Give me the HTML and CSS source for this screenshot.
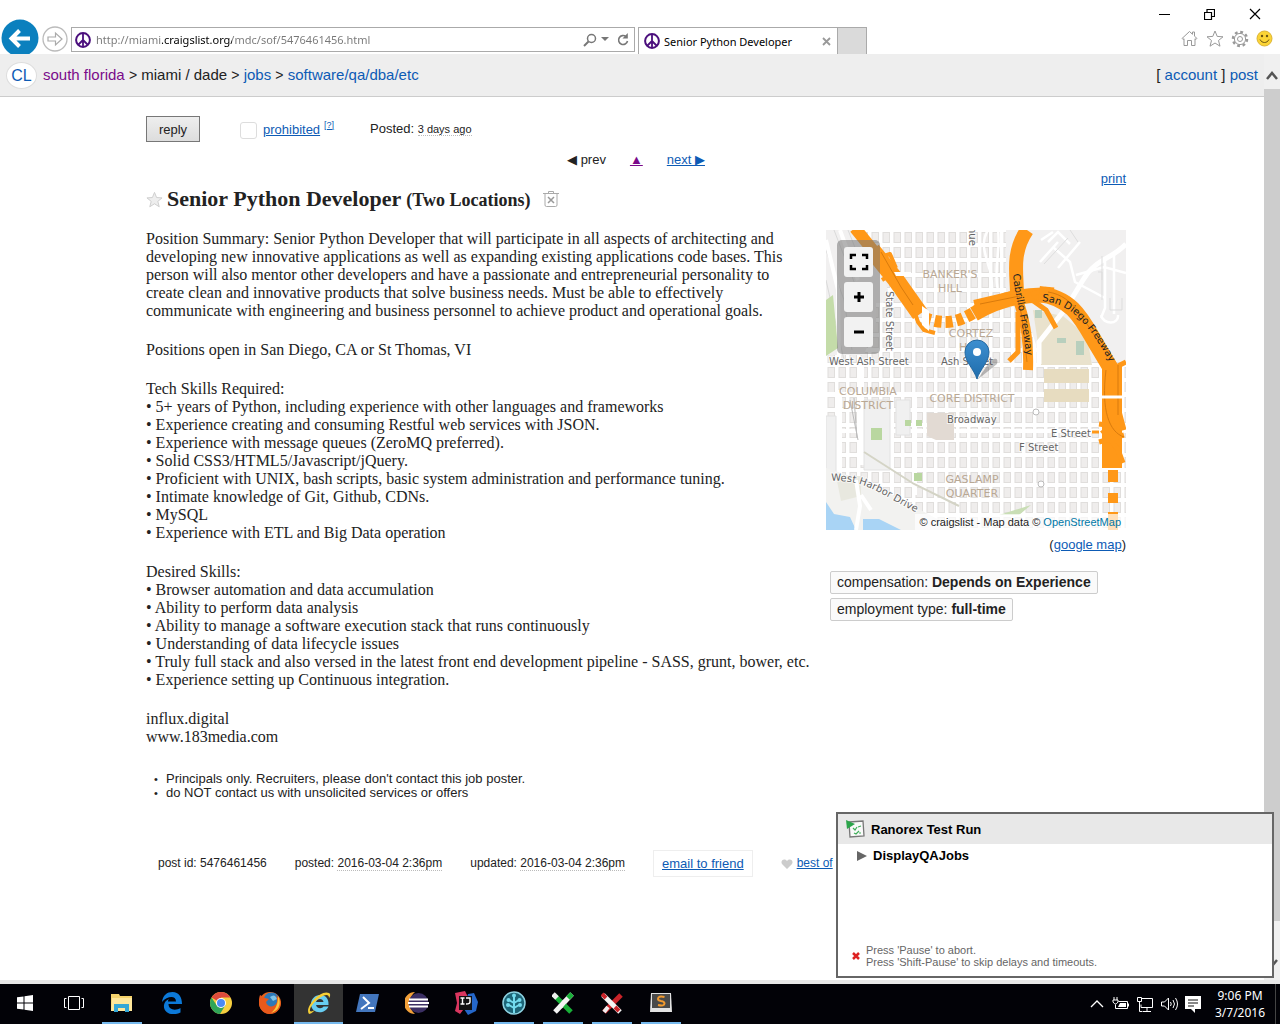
FILE: index.html
```html
<!DOCTYPE html>
<html lang="en">
<head>
<meta charset="utf-8">
<title>Senior Python Developer</title>
<link rel="stylesheet" href="styles.css">
</head>
<body>
<svg class="defs" width="0" height="0" aria-hidden="true">
  <symbol id="peace" viewBox="0 0 16 16"><circle cx="8" cy="8" r="6.9" fill="#fff" stroke="#4b0f7d" stroke-width="2"/><path d="M8 1v14M8 8l-5 5M8 8l5 5" stroke="#4b0f7d" stroke-width="1.8" fill="none"/></symbol>
</svg>

<header class="chrome">
  <button class="nav-btn" aria-label="Back"><svg width="40" height="36" viewBox="0 0 40 36"><circle cx="20" cy="20" r="18.5" fill="#0b80be"/><path d="M30 20.500H12M19.500 12.500l-8 8 8 8" fill="none" stroke="#fff" stroke-width="4"/></svg></button>
  <button class="nav-btn forward" aria-label="Forward"><svg width="26" height="26" viewBox="0 0 26 26"><circle cx="13" cy="13" r="12" fill="#fff" stroke="#bbb" stroke-width="1.300"/><path d="M6 11h7.500V7l6.500 6-6.500 6v-4H6z" fill="none" stroke="#aaa" stroke-width="1.200"/></svg></button>
  <div class="address">
    <svg width="16" height="16"><use href="#peace"/></svg>
    <input class="url" type="text" aria-label="Address" value="http://miami.craigslist.org/mdc/sof/5476461456.html">
    <button class="nav-btn" aria-label="Search"><svg width="14" height="14" viewBox="0 0 14 14"><circle cx="8.500" cy="5.500" r="4" fill="none" stroke="#777" stroke-width="1.500"/><path d="M5.500 8.500L1 13" stroke="#777" stroke-width="2"/></svg></button>
    <button class="nav-btn" aria-label="Search options"><svg width="8" height="5"><path d="M0 0h8L4 4z" fill="#777"/></svg></button>
    <button class="nav-btn" aria-label="Refresh"><svg width="12" height="14" viewBox="0 0 12 14"><path d="M9 3.600A4.500 4.500 0 1 0 10.500 8" fill="none" stroke="#777" stroke-width="1.600"/><path d="M10.800 0v5.500H5.500z" fill="#777"/></svg></button>
  </div>
  <div class="tab">
    <svg width="16" height="16"><use href="#peace"/></svg>
    <span class="tab-title">Senior Python Developer</span>
    <button class="nav-btn" aria-label="Close tab"><svg width="9" height="9"><path d="M1 1l7 7M8 1L1 8" stroke="#999" stroke-width="1.800"/></svg></button>
  </div>
  <button class="new-tab" aria-label="New tab"></button>
  <div class="chrome-right">
    <div class="window-buttons">
      <button aria-label="Minimize"><svg width="11" height="11"><path d="M0 5.500h11" stroke="#000"/></svg></button>
      <button aria-label="Restore"><svg width="11" height="11"><path d="M.5 3.500h7v7h-7zM3 3.500V.500h7.500v7H8" fill="none" stroke="#000" stroke-width="1.200"/></svg></button>
      <button aria-label="Close"><svg width="12" height="12"><path d="M1 1l10 10M11 1L1 11" stroke="#000" stroke-width="1.200"/></svg></button>
    </div>
    <div class="tool-buttons">
      <button aria-label="Home"><svg width="17" height="17" viewBox="0 0 17 17"><path d="M1 8.500L8.500 1.500 11.500 4.300V2h2v4.200L16 8.500l-1 1-1-.8V15.500h-3.500v-5h-4v5H3V8.700L2 9.500z" fill="none" stroke="#999"/></svg></button>
      <button aria-label="Favorites"><svg width="18" height="17" viewBox="0 0 18 17"><path d="M9 1l2.200 5.400 5.800.4-4.500 3.700 1.500 5.700L9 13l-5 3.200 1.500-5.700L1 6.800l5.800-.4z" fill="none" stroke="#999"/></svg></button>
      <button aria-label="Tools"><svg width="18" height="18" viewBox="0 0 18 18"><circle cx="9" cy="9" r="7" fill="none" stroke="#999" stroke-width="2.500" stroke-dasharray="2.800 2.700"/><circle cx="9" cy="9" r="5.600" fill="#fff" stroke="#999"/><circle cx="9" cy="9" r="2.500" fill="none" stroke="#999"/></svg></button>
      <button aria-label="Feedback"><svg width="17" height="17" viewBox="0 0 17 17"><circle cx="8.500" cy="8.500" r="7.500" fill="#fbd436" stroke="#dcb436"/><circle cx="6" cy="6" r="1.200" fill="#6b5312"/><circle cx="11" cy="6" r="1.200" fill="#6b5312"/><path d="M4 9.500c2 4 7 4 9 0" fill="none" stroke="#6b5312"/></svg></button>
    </div>
  </div>
</header>

<div class="viewport">
  <div class="page">
    <nav class="topbar">
      <a class="logo" href="#">CL</a>
      <div class="crumbs"><a class="visited" href="#">south florida</a> <i>&gt;</i> <span>miami / dade</span> <i>&gt;</i> <a href="#">jobs</a> <i>&gt;</i> <a href="#">software/qa/dba/etc</a></div>
      <div class="account">[ <a href="#">account</a> ] <a href="#">post</a></div>
    </nav>

    <main class="posting">
      <div class="actions">
        <button class="reply">reply</button>
        <div class="flag"><input type="checkbox" id="prohibited"><label for="prohibited"><a href="#">prohibited</a></label><sup><a href="#">[?]</a></sup></div>
        <p>Posted: <time>3 days ago</time></p>
      </div>
      <div class="pager"><span>◀ prev</span><a class="visited" href="#">▲</a><a href="#">next ▶</a></div>
      <a class="print" href="#">print</a>
      <h1>
        <svg width="17" height="17" viewBox="0 0 18 17"><path d="M9 1l2.200 5.400 5.800.4-4.500 3.700 1.500 5.700L9 13l-5 3.200 1.500-5.700L1 6.800l5.800-.4z" fill="#eee" stroke="#ccc"/></svg>
        <span class="title">Senior Python Developer <small>(Two Locations)</small></span>
        <svg class="trash" width="16" height="18" viewBox="0 0 16 18"><path d="M0 3.500h16M5.500 3V1.500h5V3M2 3.500v11.500q0 1.500 1.500 1.500h9q1.500 0 1.500-1.500V3.500" fill="none" stroke="#aaa"/><path d="M5 7l6 6M11 7l-6 6" stroke="#999" stroke-width="1.500"/></svg>
      </h1>

      <div class="columns">
        <section class="post-body">
          <p>Position Summary: Senior Python Developer that will participate in all aspects of architecting and<br>developing new innovative applications as well as expanding existing applications code bases. This<br>person will also mentor other developers and have a passionate and entrepreneurial personality to<br>create clean and innovative products that solve business needs. Must be able to effectively<br>communicate with engineering and business personnel to achieve product and operational goals.</p>
          <p>Positions open in San Diego, CA or St Thomas, VI</p>
          <p>Tech Skills Required:<br>• 5+ years of Python, including experience with other languages and frameworks<br>• Experience creating and consuming Restful web services with JSON.<br>• Experience with message queues (ZeroMQ preferred).<br>• Solid CSS3/HTML5/Javascript/jQuery.<br>• Proficient with UNIX, bash scripts, basic system administration and performance tuning.<br>• Intimate knowledge of Git, Github, CDNs.<br>• MySQL<br>• Experience with ETL and Big Data operation</p>
          <p>Desired Skills:<br>• Browser automation and data accumulation<br>• Ability to perform data analysis<br>• Ability to manage a software execution stack that runs continuously<br>• Understanding of data lifecycle issues<br>• Truly full stack and also versed in the latest front end development pipeline - SASS, grunt, bower, etc.<br>• Experience setting up Continuous integration.</p>
          <p>influx.digital<br>www.183media.com</p>
        </section>

        <aside class="side">
          <div class="map">
            <svg width="300" height="300" viewBox="0 0 300 300">
              <defs>
                <pattern id="blocks" width="11" height="15" patternUnits="userSpaceOnUse"><rect width="11" height="15" fill="#fff"/><rect x="2" y="2.500" width="6.500" height="10" fill="#efedec" stroke="#e0dedc"/></pattern>
                <path id="cabrillo" d="M187 44C190 75 198 95 201 134"/>
                <path id="sandiego" d="M216 71C243 73 262 92 286 136"/>
                <path id="harbor" d="M5 251C42 249 58 268 100 287"/>
                <linearGradient id="pin" x2="0" y2="1"><stop stop-color="#3d8fd0"/><stop offset="1" stop-color="#1f6cab"/></linearGradient>
              </defs>
              <rect width="300" height="300" fill="#f1f0f0"/>
              <path d="M38 0H180V70L202 90 215 130 270 136 275 300H75L42 255 0 235V125L38 125 62 60z" fill="url(#blocks)"/>
              <path d="M0 132H300V300H95L0 240z" fill="url(#blocks)"/>
              <path d="M50 73H90V128H50z" fill="url(#blocks)"/>
              <g fill="none" stroke="#d9d9d9"><path d="M0 20l18 50 8 50M8 0l24 62M0 50l18 80M22 0l12 30"/></g>
              <g fill="none" stroke="#fff" stroke-width="4"><path d="M0 10l12 50 1 70M14 0l18 50M0 164h300M0 201h300M14 160v92M36 130v105M66 165v100M89 165v100"/></g>
              <path d="M0 70l7-5 5 53-12 8z" fill="#c4dca9"/>
              <path d="M38 170h26v70H38zM0 186h10v64H0zM70 170h14v35H70z" fill="#f0f0f0" stroke="#e2e2e2"/>
              <path d="M45 198h11v12H45zM79 190h6v6h-6zM90 190h6v6h-6zM88 243h8v8h-8z" fill="#b9d7a0"/>
              <path d="M101 183h27v27h-18l-9-4z" fill="#e2dad3"/>
              <path d="M0 238L42 252 132 300H0z" fill="#f2f2f0"/>
              <path d="M10 246h25v20l-20 5z" fill="#e8e8df"/>
              <path d="M38 222l50 32 45 22" fill="none" stroke="#d4d4c6" stroke-width="2"/>
              <path d="M0 272l8 12 16 3 6 13H0zM37 289l16 0 22 11H37z" fill="#a9d4f5"/>
              <path d="M30 250l4 26-4 24M35 265l10 15" fill="none" stroke="#fff" stroke-width="4"/>
              <path d="M24 170l8 40M28 168l3 40" fill="none" stroke="#bbb"/>
              <path d="M207 80l30 6 24 20 5 29h-51z" fill="#e9e2cd"/>
              <path d="M218 139h45v14h-45zM218 159h45v13h-45z" fill="#e7dcc0"/>
              <path d="M209 80h7v8h-7zM231 108h9v5h-9zM250 111h8v14h-8z" fill="#b8cfbd"/>
              <path d="M205 275l-12 10h-20z" fill="#c9deb5"/>
              <g fill="none" stroke="#fff" stroke-width="2.500"><path d="M162 0c-12 20 6 35 4 60M172 0c3 20-5 40 0 60M214 32l18-20M222 12l10-10 12 12M228 18l16 14 5 20 30 16M250 45l28-8 22 6M279 28v50l-4 10M288 24v60M275 85c2 10 18 10 17 0M254 12l-22 26M215 10l12-8"/></g>
              <path d="M300 14C285 30 270 28 257 50L240 78 213 112v22" fill="none" stroke="#fff" stroke-width="5"/>
              <g fill="none" stroke="#ddd"><path d="M218 34l24-26M244 0l8 12M276 26v44M284 68v12h12V68M272 42h4v8"/></g>
              <g fill="none" stroke="#ff9818" stroke-linejoin="round">
                <path d="M29 -2L58 34" stroke-width="12"/>
                <path d="M46 20L70 50 94 84" stroke-width="17"/>
                <path d="M58 26l6-2 6 14M56 50l8-5M85 72l7 20 6 8 11 3" stroke-width="4"/>
                <path d="M98 88C120 95 132 93 152 80" stroke-width="12" stroke-dasharray="7 4"/>
                <path d="M148 84C172 70 198 64 222 65" stroke-width="15"/>
                <path d="M148 73L195 62" stroke-width="6"/>
                <path d="M201 0C184 25 192 48 191 70" stroke-width="14"/>
                <path d="M191 68C200 90 203 112 202 140" stroke-width="10"/>
                <path d="M192 82v40l-9 9M205 64c18-4 8-6 23-4M206 70l14 10 10 18" stroke-width="5"/>
                <path d="M213 64C248 68 257 92 272 117L287 142" stroke-width="16"/>
                <path d="M286 134V238" stroke-width="20"/>
                <path d="M287 240v12M287 263v10M287 282v18" stroke-width="10"/>
                <path d="M300 132l-16 8M276 200l18 22M273 194l22 3M273 212l25-7M290 170l8 30M291 217l6 16" stroke-width="5"/>
                <path d="M266 202h7" stroke-width="3"/>
              </g>
              <g fill="none" stroke="#d97b0d"><path d="M55 22l20 35 12 18M154 74l40-8M188 52l8 35 5 45M222 62c27 4 36 30 56 58M280 140c-5 40 3 62 18 67M292 135v50"/></g>
              <path d="M276 167h22" stroke="#fff" stroke-width="3"/>
              <path d="M96 76l7 5v20l-7-6zM68 42h17v4H70z" fill="#fff"/>
              <circle cx="210" cy="182" r="3" fill="#fff" stroke="#bbb"/><circle cx="215" cy="254" r="3" fill="#fff" stroke="#bbb"/>
              <g class="district"><text x="124" y="48" text-anchor="middle">BANKER'S</text><text x="124" y="62" text-anchor="middle">HILL</text><text x="145" y="107" text-anchor="middle">CORTEZ</text><text x="145" y="121" text-anchor="middle">HILL</text><text x="42" y="165" text-anchor="middle">COLUMBIA</text><text x="42" y="179" text-anchor="middle">DISTRICT</text><text x="146" y="172" text-anchor="middle">CORE DISTRICT</text><text x="146" y="253" text-anchor="middle">GASLAMP</text><text x="146" y="267" text-anchor="middle">QUARTER</text></g>
              <g class="street"><text x="3" y="135">West Ash Street</text><text x="115" y="135">Ash Street</text><text x="121" y="193">Broadway</text><text x="225" y="207">E Street</text><text x="193" y="221">F Street</text><text transform="translate(60 61) rotate(90)">State Street</text><text transform="translate(143 -3) rotate(90)">nue</text><text><textPath href="#harbor">West Harbor Drive</textPath></text></g>
              <g class="freeway"><text><textPath href="#cabrillo">Cabrillo Freeway</textPath></text><text><textPath href="#sandiego">San Diego Freeway</textPath></text></g>
              <path d="M151 150l14-20q8-4 6 4z" fill="#000" opacity=".25"/>
              <path d="M151 149C148 139 139 132 139 122a12 12 0 0 1 24 0C163 132 154 139 151 149z" fill="url(#pin)" stroke="#2468a0"/><circle cx="151" cy="122" r="4" fill="#fff"/>
            </svg>
            <div class="map-controls">
              <button aria-label="Full screen"><svg width="20" height="18"><path d="M2 6V2h5M13 2h5v4M18 12v4h-5M7 16H2v-4" fill="none" stroke="#000" stroke-width="2.500"/></svg></button>
              <button aria-label="Zoom in"><svg width="10" height="10"><path d="M0 5h10M5 0v10" stroke="#000" stroke-width="3"/></svg></button>
              <button aria-label="Zoom out"><svg width="10" height="10"><path d="M0 5h10" stroke="#000" stroke-width="3"/></svg></button>
            </div>
            <p class="credit">© craigslist - Map data © <a href="#">OpenStreetMap</a></p>
          </div>
          <p class="google">(<a href="#">google map</a>)</p>
          <p class="attrs"><span>compensation: <b>Depends on Experience</b></span><span>employment type: <b>full-time</b></span></p>
        </aside>
      </div>

      <ul class="notices">
        <li>Principals only. Recruiters, please don't contact this job poster.</li>
        <li>do NOT contact us with unsolicited services or offers</li>
      </ul>
      <div class="infos">
        <p>post id: 5476461456</p>
        <p>posted: <time>2016-03-04 2:36pm</time></p>
        <p>updated: <time>2016-03-04 2:36pm</time></p>
        <a class="email" href="#">email to friend</a>
        <p class="best"><svg width="12" height="10" viewBox="0 0 12 10"><path d="M6 10L1 5C-1 2 3-1.500 6 2 9-1.500 13 2 11 5z" fill="#ccc"/></svg><a href="#">best of</a></p>
      </div>
    </main>
  </div>
  <div class="scrollbar" aria-hidden="true">
    <svg width="16" height="35"><path d="M3 25l5-6 5 6" fill="none" stroke="#555" stroke-width="2.500"/></svg>
    <div class="thumb"></div>
    <svg width="16" height="59"><path d="M3 39l5 6 5-6" fill="none" stroke="#555" stroke-width="2.500"/></svg>
  </div>

  <section class="ranorex">
    <h2><svg width="20" height="20" viewBox="0 0 20 20"><path d="M3 3l14-1 1 15-14 1z" fill="#fafafa" stroke="#777" stroke-width="1.300"/><path d="M0 1l9 4-8 5z" fill="#2ba44a"/><path d="M7 9l2 2 2-3M12 8l3-1M8 14l2 1 3-3M13 14h2" fill="none" stroke="#3fae59" stroke-width="1.200"/></svg>Ranorex Test Run</h2>
    <p class="run"><svg width="10" height="10"><path d="M0 0l10 5-10 5z" fill="#666"/></svg>DisplayQAJobs</p>
    <div class="hint"><svg width="8" height="8"><path d="M1 1l6 6M7 1L1 7" stroke="#d22" stroke-width="2.500"/></svg><p>Press 'Pause' to abort.<br>Press 'Shift-Pause' to skip delays and timeouts.</p></div>
  </section>
</div>

<footer class="taskbar">
  <button aria-label="Start"><svg width="16" height="16"><path d="M0 2.300l6.500-.9v6.100H0zM7.500 1.200L16 0v7.500H7.500zM0 8.500h6.500v6.100L0 13.700zM7.500 8.500H16V16l-8.500-1.200z" fill="#fff"/></svg></button>
  <button aria-label="Task View"><svg width="20" height="14"><path d="M4.500.5h11v13h-11zM2.500 2.500h-2v9h2M17.500 2.500h2v9h-2" fill="none" stroke="#fff"/></svg></button>
  <button class="open" aria-label="File Explorer"><svg width="22" height="20" viewBox="0 0 22 20"><path d="M0 1h8l1 2h12v15H0z" fill="#f6d36b"/><path d="M1 5h20v13H0z" fill="#ffe79b"/><path d="M3 19v-8h15v8h-4v-4H7v4z" fill="#35a7d6"/></svg></button>
  <button aria-label="Edge"><svg width="20" height="22" viewBox="0 0 20 22"><path d="M0 10C1 3 5 0 10.500 0 17 0 20 5 20 12H6.500c0 6 7 7 12 4v4.500C9 25 1 20 2 13c.4-3 2.500-5 5-6-1 1-1 2-1 2.500h8C14 3 5 4 0 10z" fill="#0c79d8"/></svg></button>
  <button aria-label="Chrome"><svg width="22" height="22" viewBox="0 0 22 22"><circle cx="11" cy="11" r="11" fill="#f7cf3f"/><path d="M11 11L1.500 5.500A11 11 0 0 1 20.500 5.500H11z" fill="#de4b3c"/><path d="M1.500 5.500A11 11 0 0 0 10 22l5.500-9-4.500-2-4.500 2z" fill="#2fa558"/><circle cx="11" cy="11" r="5" fill="#fff"/><circle cx="11" cy="11" r="4" fill="#4a8af4"/></svg></button>
  <button aria-label="Firefox"><svg width="22" height="22" viewBox="0 0 22 22"><circle cx="11" cy="11" r="11" fill="#e8641b"/><circle cx="12.500" cy="8.500" r="8" fill="#2d79b8"/><path d="M11 5q5-4 7 2l-4 2z" fill="#7fc4e8"/><path d="M1 3l5 3 4 1-3 3c1 5 7 6 10 2 2-3 1-6 0-9 8 6 5 18-6 19C1 22-2 12 1 3z" fill="#e8591c"/><path d="M19 4c4 7 1 15-7 17 5-4 7-9 7-17z" fill="#fbc63a"/></svg></button>
  <button class="open active" aria-label="Internet Explorer"><svg width="24" height="24" viewBox="0 0 24 24"><path d="M13 4c6 0 9 4 8.500 10H9c1 4 6 4 7.500 1.500h5C18 24 4 23 4 13c0-5 4-9 9-9zM9 11h7.500C16 7 10 7 9 11z" fill="#67cdf2"/><path d="M2 23C-3 17 13-2 22 2c2 1 1 4 0 5 0-3-2-4-6-2C8 9 2 17 3 20c1 1 3 0 5-1-3 3-5 4-6 4z" fill="#f6cf35"/></svg></button>
  <button aria-label="PowerShell"><svg width="23" height="18" viewBox="0 0 23 18"><path d="M4 0h19l-4 18H0z" fill="#4376bd"/><path d="M7 3l6 6-8 6M12 14h6" fill="none" stroke="#fff" stroke-width="2"/></svg></button>
  <button aria-label="Eclipse"><svg width="24" height="22" viewBox="0 0 24 22"><path d="M10 0a11 11 0 0 0 0 22 14 14 0 0 1 0-22z" fill="#f3a13a"/><circle cx="13.500" cy="11" r="10" fill="#3b2f63"/><path d="M4 7.500h19M3 11h21M4 14.500h19" stroke="#fff" stroke-width="1.800"/></svg></button>
  <button aria-label="IntelliJ IDEA"><svg width="24" height="24" viewBox="0 0 24 24"><path d="M1 2l10-2 5 10-10 13-5-3 2-8z" fill="#d9365f"/><path d="M14 3l6-1 4 9-2 9-8 4-4-6z" fill="#2567c9"/><path d="M5 5h13v14H5z" fill="#111"/><path d="M6.500 7h4M8.500 7v6M6.500 13h4M12 7h4v4q0 2-4 2" fill="none" stroke="#fff" stroke-width="1.400"/></svg></button>
  <button class="open" aria-label="Source tree"><svg width="24" height="24" viewBox="0 0 24 24"><circle cx="12" cy="12" r="11" fill="#1d6577" stroke="#8ed3e2" stroke-width="1.500"/><path d="M12 22V4M12 17l-5-3M12 17l5-3M12 12L7 9M12 12l5-3" stroke="#73dbee" stroke-width="2"/><g fill="#73dbee"><circle cx="12" cy="4.500" r="2"/><circle cx="6.500" cy="9" r="2"/><circle cx="17.500" cy="9" r="2"/><circle cx="6" cy="14" r="2"/><circle cx="18" cy="14" r="2"/></g></svg></button>
  <button class="open" aria-label="Ranorex Studio"><svg width="22" height="22" viewBox="0 0 22 22"><path d="M20 2L3 20" stroke="#f4f4f4" stroke-width="5"/><path d="M16 6l4-4" stroke="#18b038" stroke-width="5"/><path d="M2 3l17 17" stroke="#18b038" stroke-width="5"/><path d="M1 2l4 4" stroke="#eee" stroke-width="5"/><path d="M13 9l-5 6" stroke="#f4f4f4" stroke-width="5"/></svg></button>
  <button class="open" aria-label="Ranorex Recorder"><svg width="22" height="22" viewBox="0 0 22 22"><path d="M20 3L3 20" stroke="#c92329" stroke-width="5"/><path d="M2 3l17 17" stroke="#f4f4f4" stroke-width="5"/><path d="M1 2l4 4M14 15l4 4" stroke="#c92329" stroke-width="4"/><path d="M7 15l-4 5" stroke="#eee" stroke-width="4"/></svg></button>
  <button class="open" aria-label="Sublime Text"><svg width="22" height="20" viewBox="0 0 22 20"><path d="M1 0h20l1 19H0z" fill="#e3e3e3"/><path d="M2 1h18v14H2z" fill="#4a4a4a"/><path d="M14.500 4Q8 2.500 8 6q0 1.500 3 2 3.500.5 3.500 2.500 0 3-6.500 1.500" fill="none" stroke="#f29a2e" stroke-width="2"/></svg></button>
  <div class="tray">
    <svg viewBox="0 0 24 20"><path d="M6 13l6-6 6 6" fill="none" stroke="#fff" stroke-width="1.300"/></svg>
    <svg viewBox="0 0 24 20"><path d="M9.500 7.500h9v7h-12v-4M5 3v3M8 3v3M4 6h5v2q-2.500 4-5 0zM19.500 9.500v3" fill="none" stroke="#fff"/><path d="M11 9h6v4H9z" fill="#fff"/></svg>
    <svg viewBox="0 0 24 20"><path d="M9 4.500h10.500v9H8v-3M10 17.500h8M14 14v3M4.500 3.500h4v4h-4zM6.500 8v9.500h3" fill="none" stroke="#fff"/></svg>
    <svg viewBox="0 0 24 20"><path d="M4.500 8h3l4-4v12l-4-4h-3zM13.500 8q1.500 2 0 4M16 6q3 4 0 8M18.500 4q4 6 0 12" fill="none" stroke="#fff"/></svg>
    <svg viewBox="0 0 24 20"><path d="M4 2h16v13h-6v4l-4-4H4z" fill="#fff"/><path d="M7 6h10M7 9h10M7 12h6" stroke="#111"/></svg>
    <p class="clock">9:06 PM<br>3/7/2016</p>
    <div class="peek"></div>
  </div>
</footer>
</body>
</html>
```

FILE: styles.css
```css
* { box-sizing: border-box; }
body { margin: 0; height: 100vh; display: flex; flex-direction: column; overflow: hidden; background: #fff; color: #222; font-family: "Liberation Sans", Arial, sans-serif; font-size: 13px; line-height: 15px; }
p, h1, h2, ul { margin: 0; padding: 0; }
button { margin: 0; padding: 0; border: 0; background: none; font: inherit; color: inherit; }
svg { display: block; flex: none; }
a { color: #0d5bb5; }
.visited { color: #7a0a8a; }
.defs { position: absolute; }

/* Browser chrome */
.chrome { display: flex; align-items: flex-end; height: 54px; overflow: hidden; font-family: "Noto Sans", "Open Sans", sans-serif; font-size: 11px; }
.forward { padding: 0 3px 2px 2px; }
.address { display: flex; align-items: center; gap: 4px; width: 564px; height: 25px; margin-bottom: 2px; padding: 0 5px 0 3px; border: 1px solid #aaa; }
.address .nav-btn + .nav-btn + .nav-btn { margin-left: 4px; }
.url { flex: 1; min-width: 0; height: 20px; padding: 0 1px; border: 0; outline: 0; font: inherit; color: transparent; background: linear-gradient(90deg, #777 67px, #000 67px, #000 137px, #777 137px); -webkit-background-clip: text; background-clip: text; }
.tab { display: flex; align-items: center; gap: 4px; width: 200px; height: 27px; margin-left: 3px; padding: 0 6px 0 5px; border: 1px solid #aaa; border-bottom: 0; }
.tab-title { flex: 1; color: #000; white-space: nowrap; }
.new-tab { width: 29px; height: 27px; border: 1px solid #aaa; border-width: 1px 1px 0 0; background: #dadada; }
.chrome-right { flex: 1; align-self: stretch; display: flex; flex-direction: column; padding-right: 3px; }
.window-buttons, .tool-buttons { display: flex; justify-content: flex-end; height: 28px; }
.tool-buttons { height: 21px; }
.window-buttons button, .tool-buttons button { display: flex; align-items: center; justify-content: center; width: 45px; }
.tool-buttons button { width: 25px; }

/* Page */
.viewport { flex: 1; min-height: 0; display: flex; position: relative; border-bottom: 4px solid #e8e8e8; }
.page { flex: 1; min-width: 0; overflow: hidden; }
.topbar { display: flex; align-items: center; height: 43px; padding: 0 6px; background: #eee; border-bottom: 1px solid #ccc; font-size: 15px; line-height: 18px; }
.topbar a { text-decoration: none; }
.topbar i { font-size: 14px; font-style: normal; }
.logo { width: 31px; height: 27px; margin-right: 6px; border: 1px solid #ddd; border-radius: 50%; background: #fff; font-size: 16px; line-height: 25px; text-align: center; }
.crumbs { flex: 1; }
.posting { max-width: 988px; margin: 0 auto; padding: 19px 0 0 8px; }
.actions { display: flex; align-items: center; height: 26px; }
.reply { width: 54px; height: 26px; margin-right: 40px; border: 1px solid #777; background: linear-gradient(#eee, #ddd); }
.flag { display: flex; align-items: center; width: 130px; }
.flag input { appearance: none; width: 17px; height: 17px; margin: 2px 6px 0 0; border: 1px solid #ddd; border-radius: 3px; }
.flag sup { margin: -8px 0 0 4px; font-size: 9px; line-height: 9px; }
time { border-bottom: 1px dotted #bbb; }
.actions time { font-size: 11px; }
.pager { display: flex; justify-content: center; gap: 24px; margin-top: 10px; }
.print { display: block; width: max-content; margin: 4px 0 0 auto; }
h1 { display: flex; align-items: center; height: 26px; margin-bottom: 18px; font-family: "Liberation Serif", "Times New Roman", serif; font-size: 22px; line-height: 26px; }
h1 small { font-size: 18px; }
.title { margin: 0 12px 0 4px; }
.columns { display: flex; justify-content: space-between; }
.post-body { display: flex; flex-direction: column; gap: 21px; font-family: "Liberation Serif", "Times New Roman", serif; font-size: 16px; line-height: 18px; white-space: nowrap; }
.side { width: 300px; }
.map { position: relative; overflow: hidden; }
.map text { font-family: "DejaVu Sans", sans-serif; font-size: 10px; }
.map .district text { font-size: 11px; }
.district { fill: #b9a894; }
.street { fill: #666; paint-order: stroke; stroke: #ffffffaa; stroke-width: 2px; }
.freeway { fill: #222; }
.map-controls { position: absolute; left: 11px; top: 10px; display: flex; flex-direction: column; gap: 5px; padding: 7px; border-radius: 5px; background: #7777778c; }
.map-controls button { display: flex; align-items: center; justify-content: center; width: 29px; height: 30px; border-radius: 3px; background: #f2f2f2; }
.credit { position: absolute; right: 0; bottom: 0; padding: 1px 5px 0; background: #ffffffb3; font-size: 11px; white-space: nowrap; }
.credit a { color: #0078a8; text-decoration: none; }
.google { margin-top: 7px; text-align: right; }
.attrs { display: flex; flex-direction: column; align-items: flex-start; gap: 4px; margin: 19px 0 0 4px; font-size: 14px; line-height: 21px; white-space: nowrap; }
.attrs span { padding: 0 6px; border: 1px solid #ccc; border-radius: 2px; background: #fafafa; }
.notices { margin-top: 26px; padding-left: 20px; list-style: none; line-height: 14px; }
.notices li::before { content: "•"; display: inline-block; width: 12px; margin-left: -12px; font-size: 11px; }
.infos { display: flex; align-items: center; gap: 28px; margin-top: 50px; padding-left: 12px; font-size: 12px; white-space: nowrap; }
.email { padding: 5px 8px; border: 1px solid #eee; font-size: 13px; }
.best { display: flex; align-items: center; gap: 4px; }

.scrollbar { display: flex; flex-direction: column; width: 16px; background: #f0f0f0; }
.thumb { flex: 1; background: #cdcdcd; }

/* Test runner window over the page */
.ranorex { position: absolute; right: 6px; bottom: 2px; width: 438px; height: 166px; display: flex; flex-direction: column; border: 2px solid #666; background: #fff; color: #000; }
.ranorex h2 { display: flex; align-items: center; gap: 5px; height: 30px; padding-left: 8px; background: #e8e8e8; font-size: 13px; }
.run { display: flex; align-items: center; gap: 6px; padding: 4px 0 0 19px; font-weight: bold; }
.hint { display: flex; align-items: center; gap: 6px; margin-top: auto; padding: 0 0 8px 14px; font-size: 11px; line-height: 12px; color: #666; }

/* Taskbar */
.taskbar { display: flex; height: 40px; background: #020207; color: #fff; }
.taskbar button { display: flex; align-items: center; justify-content: center; width: 49px; border-bottom: 2px solid transparent; }
.taskbar .open { width: 40px; margin: 0 5px 0 4px; border-color: #76b9ed; }
.taskbar .active { width: 49px; margin: 0; background: #333; }
.tray { flex: 1; display: flex; align-items: center; justify-content: flex-end; }
.tray svg { width: 24px; height: 20px; }
.clock { width: 70px; font-family: "Noto Sans", "Open Sans", sans-serif; font-size: 12px; line-height: 17px; text-align: center; }
.peek { width: 5px; height: 40px; border-left: 1px solid #444; }
```
